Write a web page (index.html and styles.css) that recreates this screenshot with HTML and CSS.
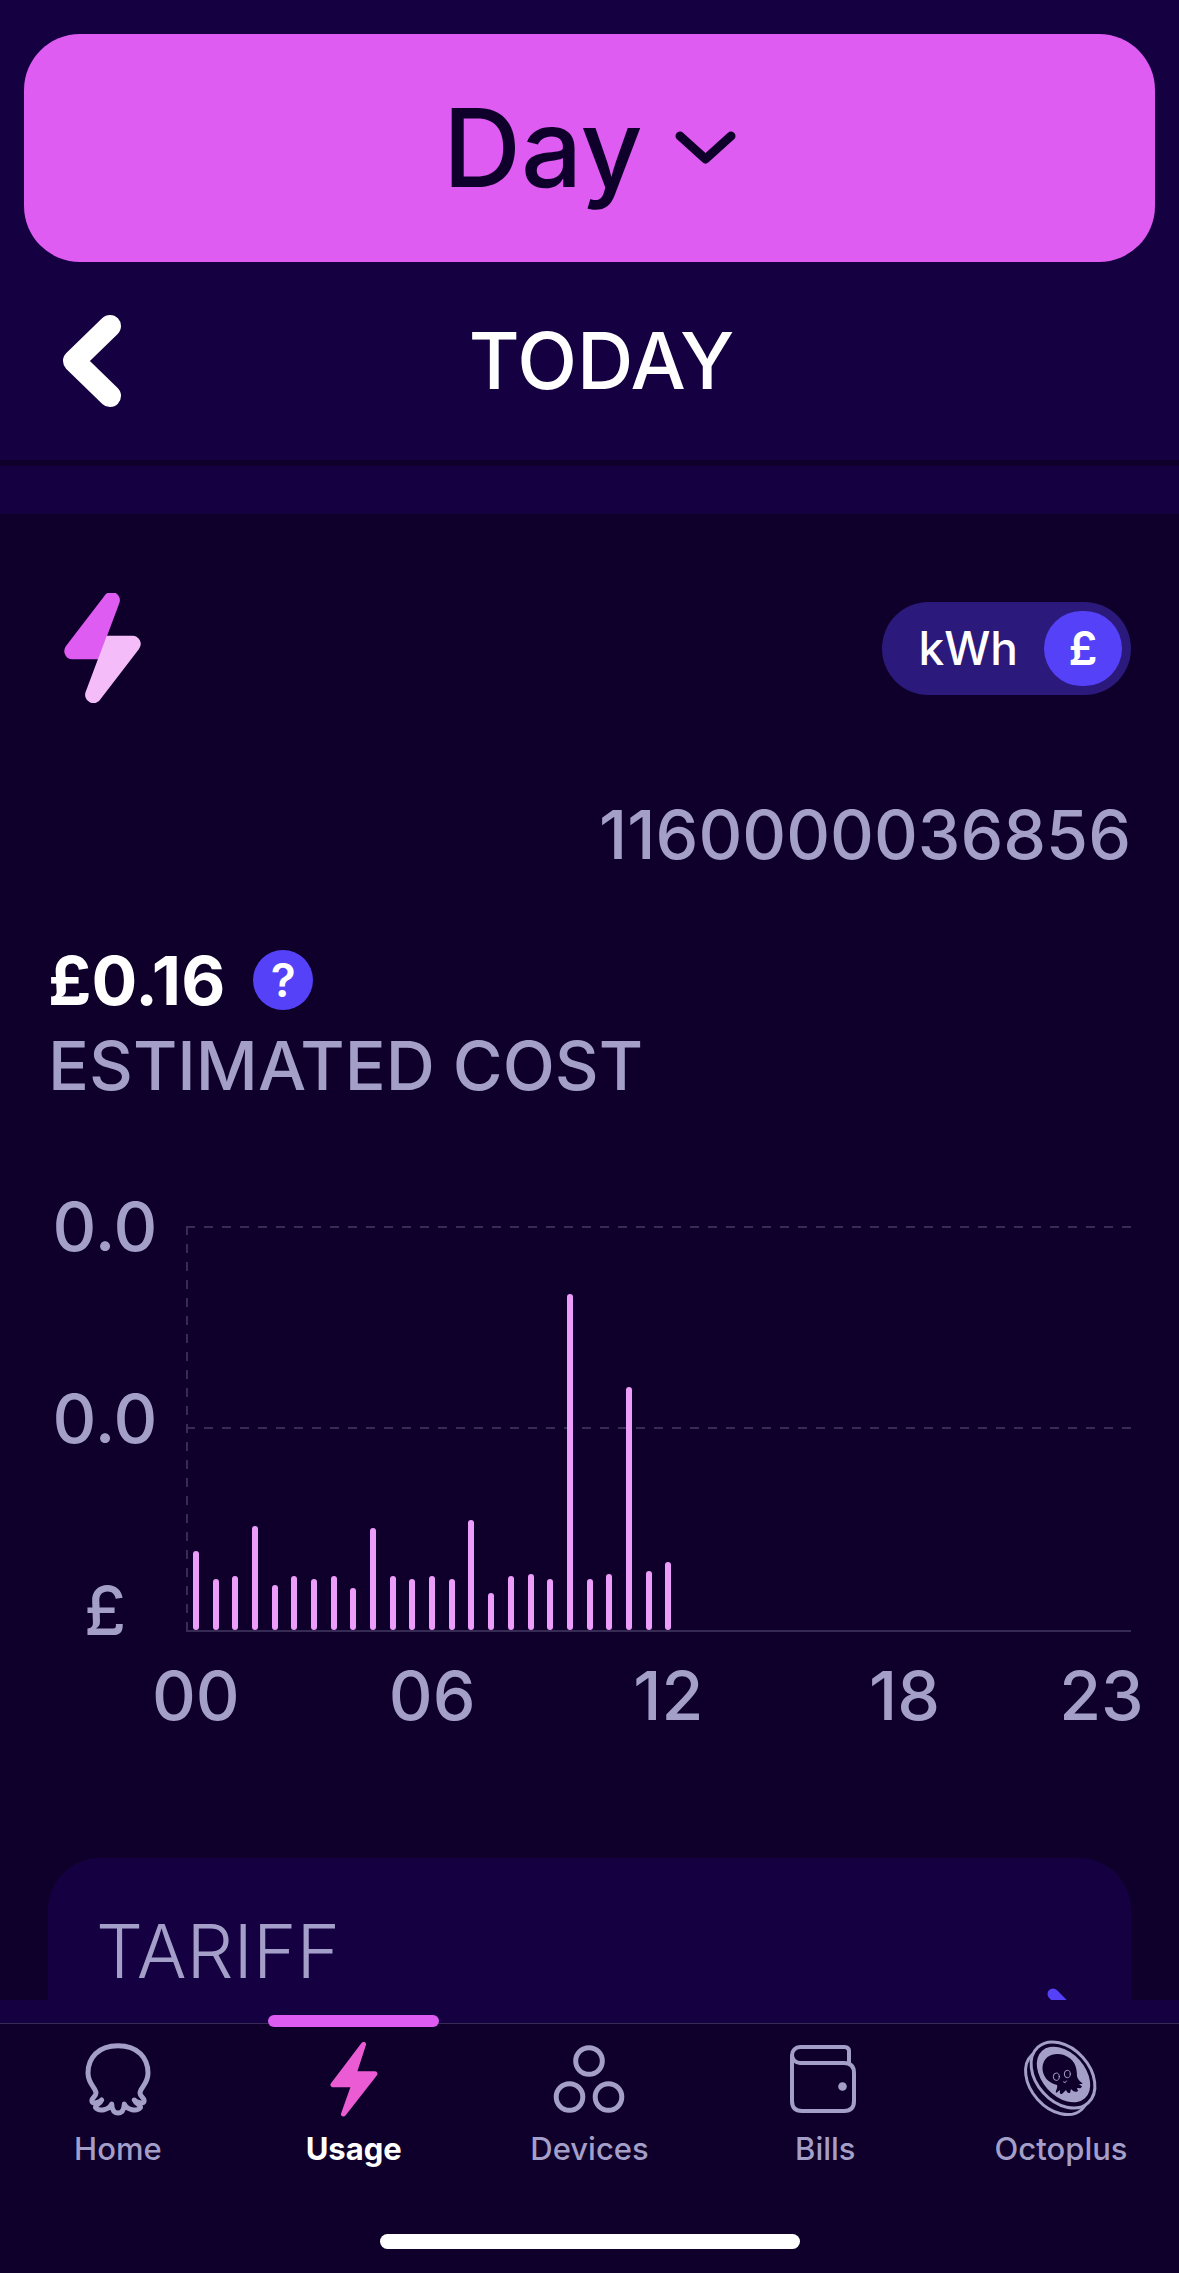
FILE: index.html
```html
<!DOCTYPE html>
<html lang="en">

<head>
  <meta charset="UTF-8">
  <meta name="viewport" content="width=device-width, initial-scale=1.0">
  <title>Usage</title>
  <link rel="stylesheet" href="styles.css">
</head>

<body>
  <div class="app">
    <header class="header">
      <div class="period">
        <select class="period-select" aria-label="Period">
          <option selected>Day</option>
        </select>
        <svg class="period-chevron" width="61" height="34" viewBox="0 0 61 34" aria-hidden="true">
          <path d="M5 5L30.5 28L56 5" />
        </svg>
      </div>
      <div class="date-row">
        <button class="back-btn" aria-label="Previous day">
          <svg width="64" height="94" viewBox="0 0 64 94">
            <path d="M50 12L14 47L50 82" />
          </svg>
        </button>
        <h1 class="date-title">TODAY</h1>
      </div>
    </header>

    <main class="content">
      <div class="meter-row">
        <svg width="84" height="110" viewBox="-3 0 84 110" aria-hidden="true">
          <path class="bolt-top" d="M40 3.5A8.3 8.3 0 0 1 55 11L34.3 66.3H8.5A8.3 8.3 0 0 1 2 53Z" />
          <path class="bolt-bottom" d="M37 105.5A8.3 8.3 0 0 1 22 98L42.7 42.7H68.5A8.3 8.3 0 0 1 75 56Z" />
        </svg>
        <div class="unit-toggle" role="group" aria-label="Unit">
          <button class="unit-btn" aria-pressed="false">kWh</button>
          <button class="unit-btn active" aria-pressed="true">£</button>
        </div>
      </div>

      <p class="meter-number">1160000036856</p>

      <div class="cost">
        <div class="cost-row">
          <strong class="cost-value">£0.16</strong>
          <button class="help-btn" aria-label="About this estimate">?</button>
        </div>
        <p class="cost-label">ESTIMATED COST</p>
      </div>

      <div class="chart">
        <div class="y-axis">
          <span>0.0</span>
          <span>0.0</span>
          <span>£</span>
        </div>
        <div class="plot">
          <svg class="grid-lines" aria-hidden="true">
            <line x1="0" y1="1" x2="100%" y2="1" />
            <line x1="0" y1="50%" x2="100%" y2="50%" />
            <line x1="1" y1="0" x2="1" y2="100%" />
          </svg>
          <!-- half-hourly readings, 48 slots -->
          <div class="bars">
            <i style="height: 79px"></i>
            <i style="height: 51px"></i>
            <i style="height: 54px"></i>
            <i style="height: 104px"></i>
            <i style="height: 45px"></i>
            <i style="height: 54px"></i>
            <i style="height: 51px"></i>
            <i style="height: 54px"></i>
            <i style="height: 42px"></i>
            <i style="height: 102px"></i>
            <i style="height: 54px"></i>
            <i style="height: 51px"></i>
            <i style="height: 54px"></i>
            <i style="height: 51px"></i>
            <i style="height: 110px"></i>
            <i style="height: 37px"></i>
            <i style="height: 54px"></i>
            <i style="height: 56px"></i>
            <i style="height: 51px"></i>
            <i style="height: 336px"></i>
            <i style="height: 51px"></i>
            <i style="height: 56px"></i>
            <i style="height: 243px"></i>
            <i style="height: 59px"></i>
            <i style="height: 68px"></i>
          </div>
        </div>
        <div class="x-axis">
          <span class="hour-00">00</span>
          <span class="hour-06">06</span>
          <span class="hour-12">12</span>
          <span class="hour-18">18</span>
          <span class="hour-23">23</span>
        </div>
      </div>

      <a class="tariff-card" href="#">
        <h2 class="tariff-title">TARIFF</h2>
        <svg class="tariff-chevron" width="36" height="60" viewBox="0 0 36 60" aria-hidden="true">
          <path d="M6 6L30 30L6 54" />
        </svg>
      </a>
    </main>

    <nav class="nav">
      <div class="tabs">
        <a class="tab" href="#">
          <svg class="tab-icon" width="74" height="74" viewBox="0 0 74 74">
            <path class="line-thick" d="M37 3.7C17 3.7 7 16 7 31C7 42 15 46 15 51C15 55 10 56 11 59.5C12 62 18 61 20.7 58C19 62 14 63 14.5 65.5C18 70 28 68 30.7 62C31 68 33 71 37 71C41 71 43 68 43.3 62C46 68 56 70 59.5 65.5C60 63 55 62 53.3 58C56 61 62 62 63 59.5C64 56 59 55 59 51C59 46 67 42 67 31C67 16 57 3.7 37 3.7Z" />
          </svg>
          <span>Home</span>
        </a>
        <a class="tab active" href="#" aria-current="page">
          <svg class="tab-icon" width="74" height="74" viewBox="0 0 74 74">
            <path class="tab-bolt" d="M46.5 2.5L16 42.7H37L26.5 72L58 31.7H37Z" />
          </svg>
          <span>Usage</span>
        </a>
        <a class="tab" href="#">
          <svg class="tab-icon" width="74" height="74" viewBox="0 0 74 74">
            <circle class="line-thick" cx="37" cy="19" r="13.3" />
            <circle class="line-thick" cx="17.5" cy="55" r="13.3" />
            <circle class="line-thick" cx="56.5" cy="55" r="13.3" />
          </svg>
          <span>Devices</span>
        </a>
        <a class="tab" href="#">
          <svg class="tab-icon" width="74" height="74" viewBox="0 0 74 74">
            <path class="line" d="M61 21V9.5Q61 5 56.5 5H12A8 8 0 0 0 12 21H56Q66 21 66 31V59Q66 69 56 69H14Q4 69 4 59V13" />
            <circle class="solid" cx="54.5" cy="44.5" r="4.3" />
          </svg>
          <span>Bills</span>
        </a>
        <a class="tab" href="#">
          <svg class="tab-icon" width="74" height="74" viewBox="0 0 74 74">
            <ellipse class="line-thin" cx="33" cy="40" rx="37" ry="26" transform="rotate(48 33 40)" />
            <ellipse class="line-thin cover" cx="39" cy="33" rx="37.5" ry="26.5" transform="rotate(48 39 33)" />
            <ellipse class="solid" cx="39.5" cy="32.5" rx="32" ry="21.5" transform="rotate(48 39.5 32.5)" />
            <path class="octopus" d="M18.500 25C19.500 13 31 10 40 13C50 17 53 24 53 34C54 39 58 40 58.500 42L55 42L58 44.500C57 47 55 46 53 46L54 49C51 51 49 49 47 47L46 51C43 51 43 50 42 48L38 52C35 52 36 50 36 48L32 51C31 48 34 47 33 43C24 41 18 34 18.500 25Z" />
            <ellipse class="eye" cx="32.3" cy="34.7" rx="3" ry="3.7" />
            <ellipse class="eye" cx="43.3" cy="32" rx="3" ry="3.7" />
            <path class="eye" d="M39.5 40Q41.500 42 42.5 39" />
          </svg>
          <span>Octoplus</span>
        </a>
      </div>
      <div class="home-indicator"></div>
    </nav>
  </div>
</body>

</html>
```

FILE: styles.css
```css
:root {
  --bg: #0e002a;
  --panel: #150042;
  --pink: #de5cf1;
  --pink-light: #f4bdf9;
  --bar: #ec9cfa;
  --blue: #5541f7;
  --toggle: #2b1a7c;
  --muted: #a49fc8;
  --rule: #362b55;
  --white: #ffffff;
}

* {
  margin: 0;
  padding: 0;
  box-sizing: border-box;
}

body {
  background: var(--bg);
  color: var(--muted);
  font-family: Inter, "Liberation Sans", sans-serif;
  font-size: 68px;
  font-weight: 500;
  line-height: 80px;
}

button,
select {
  border: none;
  background: none;
  color: inherit;
  font: inherit;
  cursor: pointer;
}

a {
  color: inherit;
  text-decoration: none;
}

svg {
  display: block;
  fill: none;
  stroke-linecap: round;
  stroke-linejoin: round;
}

.app {
  display: flex;
  flex-direction: column;
  height: 100vh;
}

/* Header */
.header {
  flex: none;
  padding-top: 34px;
  background: var(--panel);
  border-bottom: 6px solid var(--bg);
}

.period {
  display: flex;
  align-items: center;
  justify-content: center;
  gap: 32px;
  height: 228px;
  margin: 0 24px;
  border-radius: 56px;
  background: var(--pink);
  color: var(--bg);
}

.period-select {
  appearance: none;
  font-size: 108px;
  line-height: 136px;
}

.period-chevron {
  stroke: var(--bg);
  stroke-width: 9;
}

.date-row {
  display: grid;
  grid-template-columns: 96px 1fr 96px;
  align-items: center;
  height: 198px;
  padding: 0 36px 0 60px;
}

.back-btn svg {
  stroke: var(--white);
  stroke-width: 22;
}

.date-title {
  color: var(--white);
  font-size: 78px;
  font-weight: 500;
  text-align: center;
}

/* Usage */
.content {
  flex: 1;
  min-height: 0;
  overflow: hidden;
  padding: 79px 48px 0;
  border-top: 48px solid var(--panel);
}

.meter-row {
  display: flex;
  align-items: center;
  justify-content: space-between;
  padding-left: 13px;
}

.unit-toggle {
  display: flex;
  align-items: center;
  gap: 26px;
  padding: 9px 9px 9px 36px;
  border-radius: 48px;
  background: var(--toggle);
  color: var(--white);
}

.unit-btn {
  font-size: 46px;
  line-height: 75px;
}

.unit-btn.active {
  width: 78px;
  border-radius: 39px;
  background: var(--blue);
  font-weight: 600;
}

.bolt-top {
  fill: var(--pink);
}

.bolt-bottom {
  fill: var(--pink-light);
}

.meter-number {
  margin-top: 91px;
  text-align: right;
}

.cost {
  margin-top: 66px;
}

.cost-row {
  display: flex;
  align-items: center;
  gap: 28px;
}

.cost-value {
  color: var(--white);
  font-weight: 700;
}

.help-btn {
  width: 60px;
  height: 60px;
  border-radius: 50%;
  background: var(--blue);
  color: var(--white);
  font-size: 46px;
  font-weight: 600;
  line-height: 60px;
}

.cost-label {
  margin-top: 5px;
}

/* Chart */
.chart {
  display: grid;
  grid-template-columns: 114px 1fr;
  column-gap: 24px;
  margin-top: 81px;
}

.y-axis {
  display: flex;
  flex-direction: column;
  justify-content: space-between;
  height: 464px;
  margin-bottom: -16px;
  text-align: center;
}

.plot {
  display: grid;
  height: 406px;
  margin-top: 40px;
  border-bottom: 2px solid var(--rule);
}

.grid-lines,
.bars {
  grid-area: 1 / 1;
  width: 100%;
  height: 100%;
}

.grid-lines line {
  stroke: var(--rule);
  stroke-width: 2;
  stroke-dasharray: 9 9;
  stroke-linecap: butt;
}

.bars,
.x-axis {
  display: grid;
  grid-template-columns: repeat(48, 1fr);
}

.bars {
  align-items: end;
  justify-items: center;
}

.bars i {
  width: 6px;
  border-radius: 3px;
  background: var(--bar);
}

.x-axis {
  grid-column: 2;
  margin-top: 21px;
}

.x-axis span {
  display: flex;
  justify-content: center;
  width: 0;
  justify-self: center;
}

.hour-00 {
  grid-column: 1;
}

.hour-06 {
  grid-column: 13;
}

.hour-12 {
  grid-column: 25;
}

.hour-18 {
  grid-column: 37;
}

.hour-23 {
  grid-column: 47;
}

/* Tariff */
.tariff-card {
  display: flex;
  align-items: center;
  justify-content: space-between;
  min-height: 320px;
  margin-top: 123px;
  padding: 53px 48px;
  border-radius: 52px;
  background: var(--panel);
}

.tariff-title {
  align-self: flex-start;
  font-size: 74px;
  font-weight: 300;
}

.tariff-chevron {
  stroke: var(--blue);
  stroke-width: 11;
}

/* Bottom navigation */
.nav {
  flex: none;
  padding-bottom: 24px;
  border-top: 23px solid var(--panel);
}

.tabs {
  display: grid;
  grid-template-columns: repeat(5, 1fr);
  border-top: 1px solid var(--rule);
}

.tab {
  position: relative;
  display: flex;
  flex-direction: column;
  align-items: center;
  gap: 13px;
  padding-top: 18px;
  font-size: 31px;
  line-height: 40px;
}

.tab.active {
  color: var(--white);
  font-weight: 700;
}

.tab.active::before {
  content: "";
  position: absolute;
  top: -9px;
  width: 171px;
  height: 12px;
  border-radius: 6px;
  background: var(--pink);
}

.tab-icon {
  overflow: visible;
}

.line,
.line-thick,
.line-thin {
  stroke: var(--muted);
  stroke-width: 4;
}

.line-thick {
  stroke-width: 5;
}

.line-thin {
  stroke-width: 3;
}

.solid {
  fill: var(--muted);
}

.cover,
.octopus {
  fill: var(--bg);
}

.eye {
  stroke: var(--muted);
  stroke-width: 1;
}

.tab-bolt {
  fill: #eb5cd4;
  stroke: #eb5cd4;
  stroke-width: 5;
}

.home-indicator {
  width: 420px;
  height: 15px;
  margin: 65px auto 0;
  border-radius: 8px;
  background: var(--white);
}
```
